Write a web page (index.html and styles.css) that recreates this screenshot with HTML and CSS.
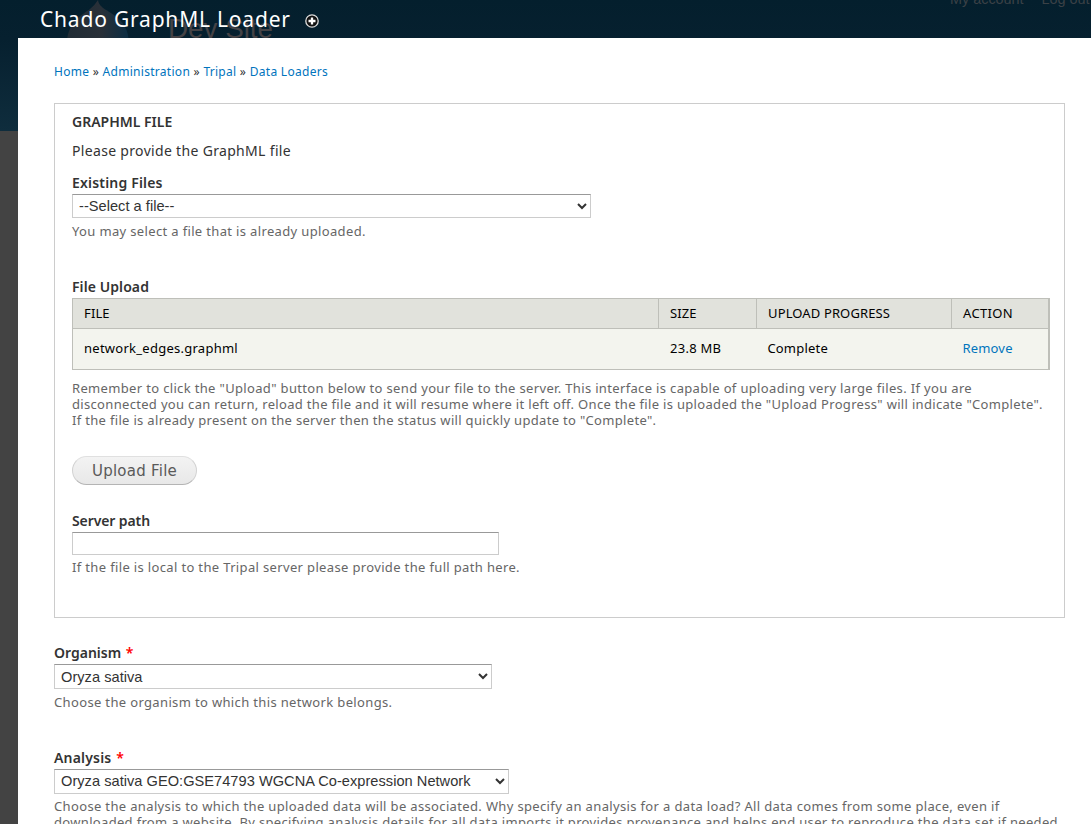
FILE: index.html
```
<!DOCTYPE html>
<html lang="en">
<head>
<meta charset="utf-8">
<title>Chado GraphML Loader</title>
<link rel="stylesheet" href="styles.css">
</head>
<body>
<div class="site">
  <svg class="site-logo" width="70" height="42" viewBox="0 0 70 42"><defs><linearGradient id="drop" x1="0" y1="0" x2="1" y2="0"><stop offset="0" stop-color="#202c35"/><stop offset=".55" stop-color="#293038"/><stop offset="1" stop-color="#0b2d43"/></linearGradient></defs><path d="M32 0C33 9 44 10 54 20Q62 28 63 42H1C2 22 16 15 24 9Q29 5 32 0Z" fill="url(#drop)"/></svg>
  <div class="site-name">Dev Site</div>
  <div class="site-links"><span>My account</span><span>Log out</span></div>
</div>
<div class="overlay">
  <header class="title-bar">
    <h1 class="title">Chado GraphML Loader</h1>
    <svg class="add" width="14" height="14" viewBox="0 0 14 14"><circle cx="7" cy="7" r="6.2" fill="#111" stroke="#ddd" stroke-width="1.3"/><path d="M7 3.5v7M3.5 7h7" stroke="#fff" stroke-width="2.3"/></svg>
  </header>
  <main class="panel">
    <nav class="crumbs"><a>Home</a> » <a>Administration</a> » <a>Tripal</a> » <a>Data Loaders</a></nav>
    <section class="fieldset">
      <h2 class="legend">GRAPHML FILE</h2>
      <p class="intro">Please provide the GraphML file</p>
      <div class="field existing">
        <label class="label label-spaced">Existing Files</label>
        <select class="select wide"><option>--Select a file--</option></select>
        <p class="desc">You may select a file that is already uploaded.</p>
      </div>
      <div class="field upload">
        <label class="label">File Upload</label>
        <table class="files">
          <thead><tr><th class="c-file">FILE</th><th class="c-size">SIZE</th><th class="c-prog">UPLOAD PROGRESS</th><th class="c-act">ACTION</th></tr></thead>
          <tbody><tr><td>network_edges.graphml</td><td>23.8 MB</td><td>Complete</td><td><a>Remove</a></td></tr></tbody>
        </table>
        <p class="desc help"><span class="line">Remember to click the "Upload" button below to send your file to the server. This interface is capable of uploading very large files. If you are</span><span class="line">disconnected you can return, reload the file and it will resume where it left off. Once the file is uploaded the "Upload Progress" will indicate "Complete".</span><span class="line">If the file is already present on the server then the status will quickly update to "Complete".</span></p>
      </div>
      <button class="button">Upload File</button>
      <div class="field server">
        <label class="label label-tight">Server path</label>
        <input class="input" type="text">
        <p class="desc">If the file is local to the Tripal server please provide the full path here.</p>
      </div>
    </section>
    <div class="field organism">
      <label class="label">Organism <span class="req">*</span></label>
      <select class="select mid"><option>Oryza sativa</option></select>
      <p class="desc">Choose the organism to which this network belongs.</p>
    </div>
    <div class="field analysis">
      <label class="label label-spaced">Analysis <span class="req">*</span></label>
      <select class="select long"><option>Oryza sativa GEO:GSE74793 WGCNA Co-expression Network</option></select>
      <p class="desc"><span class="line">Choose the analysis to which the uploaded data will be associated. Why specify an analysis for a data load? All data comes from some place, even if</span><span class="line line-last">downloaded from a website. By specifying analysis details for all data imports it provides provenance and helps end user to reproduce the data set if needed.</span></p>
    </div>
  </main>
</div>
</body>
</html>
```
FILE: styles.css
```
* { box-sizing: border-box; }
body { margin: 0; width: 1091px; height: 824px; overflow: hidden; background: #434343; color: #333; font: 14px "Lucida Grande", "Noto Sans", sans-serif; position: relative; }
h1, h2, p { margin: 0; font-weight: normal; }
.site { position: absolute; inset: 0 0 auto 0; height: 131px; overflow: hidden; background: linear-gradient(#041f2d, #06202f 30%, #0f2d3d); font-family: "Liberation Sans", sans-serif; }
.site-logo { position: absolute; left: 66px; top: 0; }
.site-name { position: absolute; left: 168px; top: 13px; font-size: 27.8px; line-height: 32px; color: #444245; }
.site-links { position: absolute; left: 950px; top: -9px; display: flex; gap: 18px; font-size: 14.4px; line-height: 16px; color: #3b4146; white-space: nowrap; }
.overlay { position: relative; padding-left: 18px; }
.title-bar { height: 38px; padding-left: 22px; display: flex; gap: 15px; }
.title { font-size: 21px; line-height: 38px; letter-spacing: .8px; color: #fff; white-space: nowrap; width: 250px; }
.add { margin-top: 14px; }
.panel { background: #fff; height: 786px; padding: 25px 26px 0 36px; overflow: hidden; }
.crumbs { font-size: 12px; line-height: 18px; letter-spacing: .291px; white-space: nowrap; }
a { color: #0074bd; }
.fieldset { margin-top: 22px; height: 515px; border: 1px solid #ccc; padding: 9px 14px 0 17px; }
.legend { font-size: 14px; font-weight: 600; line-height: 18px; }
.intro { margin-top: 11px; line-height: 18px; letter-spacing: .325px; }
.field { display: flex; flex-direction: column; align-items: flex-start; }
.label { font-weight: 600; font-size: 14px; line-height: 18px; height: 20px; white-space: nowrap; }
.label-spaced { letter-spacing: .19px; }
.label-tight { letter-spacing: -.1px; }
.existing { margin-top: 14px; }
.select { height: 24px; border: 1px solid #ccc; border-top-color: #999; border-radius: 0; background-color: #fff; color: #333; font: 14.6px "Liberation Sans", Arial, sans-serif; letter-spacing: .03px; padding: 0 2px 1px; }
.wide { width: 519px; }
.mid { width: 438px; height: 25px; padding: 1px 2px; }
.long { width: 455px; height: 25px; }
.desc { margin-top: 5px; font-size: 13px; line-height: 16px; letter-spacing: .35px; color: #666; white-space: nowrap; }
.line { display: block; }
.line-last { letter-spacing: .325px; }
.upload { margin-top: 39px; }
.upload .label { letter-spacing: .085px; }
.files { width: 978px; table-layout: fixed; border-collapse: separate; border-spacing: 0; border: 1px solid #bebfb9; border-right-width: 2px; color: #000; font-size: 13px; line-height: 16px; letter-spacing: .26px; }
.files th { height: 30px; padding: 0 0 2px 11px; background: #e1e2dc; border-bottom: 1px solid #bebfb9; border-right: 1px solid #bebfb9; text-align: left; font-weight: normal; letter-spacing: .13px; }
.files th:last-child { border-right: 0; letter-spacing: .344px; }
.files td { height: 40px; padding: 0 0 2px 11px; background: #f3f4ee; }
.files td:nth-child(n+3) { padding-left: 10.4px; letter-spacing: .2px; }
.c-file { width: 586px; } .c-size { width: 98px; } .c-prog { width: 195px; }
.help { margin-top: 10px; letter-spacing: .32px; }
.help .line:first-child { letter-spacing: .34px; }
.button { display: block; margin-top: 28px; width: 125px; height: 29px; padding: 0; border: 1px solid #e0e0e0; border-bottom-color: #b4b4b4; border-left-color: #d2d2d2; border-right-color: #d2d2d2; border-radius: 15px; background: linear-gradient(#f3f3f3, #e8e8e8); color: #5a5a5a; font: 15px/20px "DejaVu Sans", sans-serif; letter-spacing: .233px; }
.server { margin-top: 27px; }
.input { width: 427px; height: 23px; border: 1px solid #ccc; border-top-color: #999; }
.server .desc { margin-top: 4px; }
.organism { margin-top: 26px; }
.analysis { margin-top: 39px; }
.analysis .desc { margin-top: 4px; }
.req { color: red; margin-left: 1px; }
```
